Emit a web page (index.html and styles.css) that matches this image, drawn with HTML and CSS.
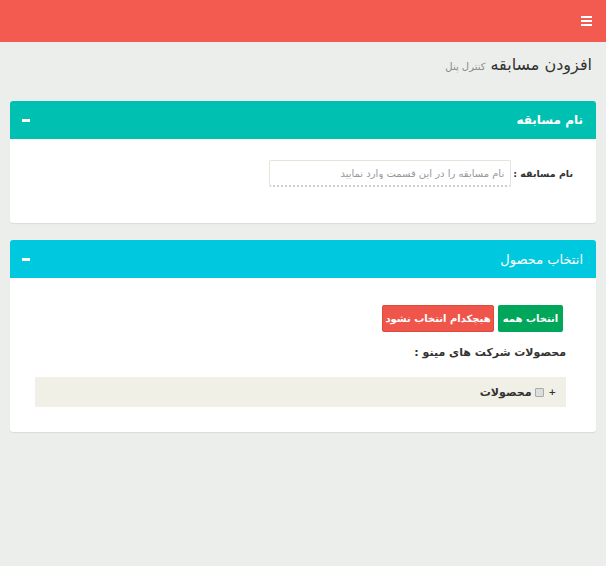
FILE: index.html
```html
<!DOCTYPE html>
<html dir="rtl" lang="fa">
<head>
  <meta charset="utf-8">
  <link rel="stylesheet" href="styles.css">
</head>
<body>

  <div class="topbar">
    <span class="menu-toggle"><i></i><i></i><i></i></span>
  </div>

  <div class="content">
    <h1 class="page-title">افزودن مسابقه <small>کنترل پنل</small></h1>

    <div class="box box-teal">
      <div class="box-header">
        <h3>نام مسابقه</h3>
        <span class="collapse-btn"></span>
      </div>
      <div class="box-body">
        <div class="form-row">
          <label for="contestName">نام مسابقه :</label>
          <input type="text" id="contestName" placeholder="نام مسابقه را در این قسمت وارد نمایید">
        </div>
      </div>
    </div>

    <div class="box box-aqua">
      <div class="box-header">
        <h3 class="light">انتخاب محصول</h3>
        <span class="collapse-btn"></span>
      </div>
      <div class="box-body">
        <div class="button-row">
          <button class="btn btn-green">انتخاب همه</button>
          <button class="btn btn-red">هیچکدام انتخاب نشود</button>
        </div>
        <div class="group-label">محصولات شرکت های مینو :</div>
        <div class="tree">
          <div class="tree-row">
            <span class="tree-plus">+</span>
            <span class="tree-check"></span>
            <span class="tree-name">محصولات</span>
          </div>
        </div>
      </div>
    </div>
  </div>

</body>
</html>
```

FILE: styles.css
```css
body {
  margin: 0;
  font-family: "DejaVu Sans", "Noto Sans", sans-serif;
  background-color: #ebeeea;
  color: #333;
  font-size: 12px;
}

.topbar {
  height: 42px;
  background-color: #f35a50;
  display: flex;
  align-items: center;
  padding: 0 14px;
}

.menu-toggle {
  display: flex;
  flex-direction: column;
  gap: 2px;
  width: 11px;
}

.menu-toggle i {
  display: block;
  height: 2px;
  background: #fff;
}

.content {
  padding: 0 10px;
}

.page-title {
  margin: 0;
  padding: 13px 4px 0;
  height: 59px;
  box-sizing: border-box;
  font-size: 16px;
  font-weight: normal;
  color: #333;
}

.page-title small {
  font-size: 10px;
  color: #888;
}

.box {
  background: #fff;
  border-radius: 3px;
  box-shadow: 0 1px 1px rgba(0, 0, 0, 0.08);
  margin-bottom: 17px;
}

.box-header {
  height: 38px;
  display: flex;
  align-items: center;
  justify-content: space-between;
  padding: 0 13px 0 12px;
  color: #fff;
  border-radius: 3px 3px 0 0;
}

.box-teal .box-header {
  background-color: #00c0b2;
}

.box-aqua .box-header {
  background-color: #00c9df;
}

.box-header h3 {
  margin: 0;
  font-size: 12px;
  font-weight: bold;
}

.box-header h3.light {
  font-weight: normal;
  font-size: 13px;
}

.collapse-btn {
  width: 8px;
  height: 3px;
  background: #fff;
}

.box-teal .box-body {
  padding: 21px 22px 36px;
}

.box-aqua .box-body {
  padding: 27px 30px 25px 25px;
}

.form-row {
  display: flex;
  align-items: center;
  gap: 2px;
  padding-right: 1px;
}

.form-row label {
  flex: 0 0 54px;
  white-space: nowrap;
  font-weight: bold;
  font-size: 9.5px;
  color: #333;
}

.form-row input {
  width: 242px;
  height: 27px;
  box-sizing: border-box;
  border: 1px solid #e4e4da;
  border-bottom: 2px dotted #ccc;
  border-radius: 2px;
  padding: 0 6px;
  font-family: inherit;
  font-size: 10px;
}

.form-row input::placeholder {
  color: #999;
}

.button-row {
  display: flex;
  gap: 4px;
  padding-right: 3px;
}

.btn {
  height: 27px;
  border: none;
  border-radius: 2px;
  color: #fff;
  font-family: inherit;
  font-size: 10px;
  font-weight: bold;
  padding: 0;
}

.btn-green {
  width: 65px;
  background-color: #00a65a;
}

.btn-red {
  width: 112px;
  background-color: #f0554b;
  border: 1px solid #dd4b39;
}

.group-label {
  margin-top: 14px;
  font-weight: bold;
  font-size: 11px;
}

.tree {
  margin-top: 18px;
}

.tree-row {
  height: 30px;
  background: #f1f0e6;
  display: flex;
  align-items: center;
  gap: 4px;
  padding: 0 10px;
}

.tree-plus {
  font-size: 9px;
  font-weight: bold;
}

.tree-check {
  width: 7px;
  height: 7px;
  border: 1px solid #aaa;
  background: #ddd;
  border-radius: 1px;
}

.tree-name {
  font-weight: bold;
  font-size: 11px;
}
```
